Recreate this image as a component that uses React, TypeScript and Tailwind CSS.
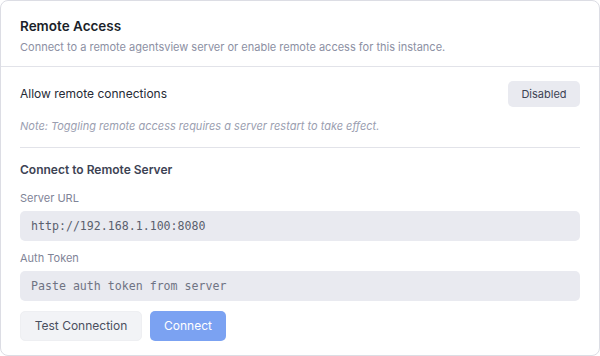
import { useState } from "react";

export default function App() {
  const [url, setUrl] = useState("http://192.168.1.100:8080");
  const [token, setToken] = useState("");

  return (
    <div
      className="h-[356px] w-[600px] bg-white"
      style={{ fontFamily: "Inter, 'Noto Sans', sans-serif" }}
    >
      <div className="flex h-full flex-col rounded-lg border border-[#dcdde4] bg-white">
        {/* Header */}
        <div className="border-b border-[#e2e3e9] px-[19px] pb-[11px] pt-[15px]">
          <h2 className="text-[13.5px] font-semibold leading-5 text-[#1b1f2a]">
            Remote Access
          </h2>
          <p className="mt-[3px] text-[11px] leading-4 text-[#8c90a3]">
            Connect to a remote agentsview server or enable remote access for
            this instance.
          </p>
        </div>

        <div className="px-[19px] pt-[14px]">
          {/* Allow toggle */}
          <div className="flex items-center justify-between">
            <span className="text-[12px] leading-[18px] text-[#262a35]">
              Allow remote connections
            </span>
            <button className="h-[26px] w-[72px] rounded-[5px] bg-[#e9eaf0] text-[11px] text-[#3d4354]">
              Disabled
            </button>
          </div>
          <p className="mt-[11px] text-[11px] italic leading-4 text-[#9a9eb0]">
            Note: Toggling remote access requires a server restart to take
            effect.
          </p>

          <div className="mt-[13px] border-t border-[#e2e3e9] pt-[13px]">
            <h3 className="text-[12px] font-semibold leading-[18px] text-[#3d4354]">
              Connect to Remote Server
            </h3>

            <label className="mt-[11px] block text-[11px] leading-4 text-[#7f8497]">
              Server URL
            </label>
            <input
              value={url}
              onChange={(e) => setUrl(e.target.value)}
              className="mt-[5px] block h-[30px] w-full rounded-[5px] bg-[#e9eaf0] px-[11px] text-[11.6px] text-[#5a5f6e] outline-none"
              style={{ fontFamily: "'DejaVu Sans Mono', monospace" }}
            />

            <label className="mt-[9px] block text-[11px] leading-4 text-[#7f8497]">
              Auth Token
            </label>
            <input
              value={token}
              onChange={(e) => setToken(e.target.value)}
              placeholder="Paste auth token from server"
              className="mt-[5px] block h-[30px] w-full rounded-[5px] bg-[#e9eaf0] px-[11px] text-[11.6px] text-[#5a5f6e] outline-none placeholder:text-[#6f7383]"
              style={{ fontFamily: "'DejaVu Sans Mono', monospace" }}
            />

            <div className="mt-[10px] flex gap-2">
              <button className="h-[30px] w-[122px] rounded-[5px] border border-[#eeeff2] bg-[#f2f3f6] text-[12px] text-[#4a4f5e]">
                Test Connection
              </button>
              <button className="h-[30px] w-[76px] rounded-[5px] bg-[#7ba2f2] text-[12px] text-white">
                Connect
              </button>
            </div>
          </div>
        </div>
      </div>
    </div>
  );
}
